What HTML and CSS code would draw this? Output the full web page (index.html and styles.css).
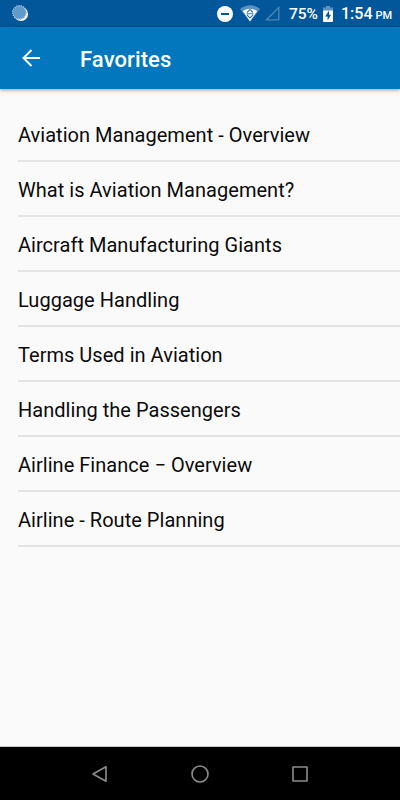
FILE: index.html
```html
<!DOCTYPE html>
<html lang="en">
<head>
    <meta charset="UTF-8">
    <meta name="viewport" content="width=device-width, initial-scale=1.0">
    <title>Favorites</title>
    <link rel="stylesheet" href="styles.css">
</head>
<body>
    <div class="status-bar">
        <svg class="sync-icon" width="18" height="18" viewBox="0 0 18 18">
            <circle cx="9" cy="9" r="7" fill="#fff"/>
            <circle cx="7.500" cy="7.500" r="6.700" fill="#5f9aca"/>
            <circle cx="7.500" cy="7.500" r="6.800" fill="none" stroke="#a9c8e2" stroke-width="1.400" stroke-dasharray="1.200 1"/>
        </svg>
        <svg class="dnd-icon" width="16" height="16" viewBox="0 0 16 16">
            <circle cx="8" cy="8" r="8" fill="#fff"/>
            <path d="M4 8h8" stroke="#02579b" stroke-width="2"/>
        </svg>
        <svg class="wifi-icon" width="20" height="17" viewBox="0 0 20 17">
            <path d="M0 4Q10-3.500 20 4L10 16.500Z" fill="#5b91bf"/>
            <path d="M2.800 6Q10 1.500 17.200 6L10 16.500Z" fill="#fff"/>
            <path d="M7 7.500L10 4.500L13 7.500M6.500 8.800h7M7 10L10 13L13 10" fill="none" stroke="#3b77ad" stroke-width="1.100"/>
        </svg>
        <svg class="signal-icon" width="15" height="15" viewBox="0 0 15 15">
            <path d="M1.500 13.800L13.800 1.500V13.800Z" fill="none" stroke="#4c87b8" stroke-width="1.300"/>
        </svg>
        <span class="battery-level">75%</span>
        <svg class="battery-icon" width="10" height="16" viewBox="0 0 10 16">
            <path d="M3 0h4v1.500h3V5H0V1.500h3Z" fill="#5b91bf"/>
            <path d="M0 4.500h10V15a1 1 0 0 1-1 1H1a1 1 0 0 1-1-1Z" fill="#fff"/>
            <path d="M6 4.500L2.200 10.500H4.600V14.500L8 8.800H6Z" fill="#02579b"/>
        </svg>
        <span class="clock">1:54 <small>PM</small></span>
    </div>

    <header class="toolbar">
        <svg class="back-icon" width="20" height="20" viewBox="0 0 20 20">
            <path d="M19 10H3M10.500 2L2.500 10L10.500 18" fill="none" stroke="#fff" stroke-width="2"/>
        </svg>
        <h1>Favorites</h1>
    </header>

    <main class="content">
        <ul class="favorites-list">
            <li>Aviation Management - Overview</li>
            <li>What is Aviation Management?</li>
            <li>Aircraft Manufacturing Giants</li>
            <li>Luggage Handling</li>
            <li>Terms Used in Aviation</li>
            <li>Handling the Passengers</li>
            <li>Airline Finance − Overview</li>
            <li>Airline - Route Planning</li>
        </ul>
    </main>

    <nav class="nav-bar">
        <svg width="18" height="18" viewBox="0 0 18 18">
            <path d="M2 9L15 1.700V16.300Z"/>
        </svg>
        <svg width="18" height="18" viewBox="0 0 18 18">
            <circle cx="9" cy="9" r="8"/>
        </svg>
        <svg width="18" height="18" viewBox="0 0 18 18">
            <rect x="2" y="2" width="14" height="14"/>
        </svg>
    </nav>
</body>
</html>
```

FILE: styles.css
```css
* {
    margin: 0;
    padding: 0;
    box-sizing: border-box;
}

body {
    font-family: Roboto, sans-serif;
    background: #fafafa;
    color: #0a0a0a;
    height: 800px;
    display: flex;
    flex-direction: column;
    overflow: hidden;
}

svg {
    display: block;
    flex-shrink: 0;
}

/* Status bar */
.status-bar {
    height: 27px;
    background: #02579b;
    color: #fff;
    display: flex;
    align-items: center;
    padding: 0 9px 0 12px;
    font-size: 16px;
    font-weight: 500;
    white-space: nowrap;
}

.dnd-icon {
    margin-left: auto;
}

.wifi-icon {
    margin-left: 7px;
}

.signal-icon {
    margin-left: 5px;
}

.battery-level {
    margin-left: 9px;
    width: 30px;
    font-size: 15.5px;
}

.battery-icon {
    margin-left: 4px;
}

.clock {
    margin-left: 8px;
    width: 50px;
}

.clock small {
    font-size: 11px;
    margin-left: -1px;
}

/* Toolbar */
.toolbar {
    height: 62px;
    background: #0277bd;
    color: #fff;
    display: flex;
    align-items: center;
    padding-left: 21px;
    box-shadow: 0 1px 4px rgba(0, 0, 0, 0.4);
}

.toolbar h1 {
    margin: 2px 0 0 39px;
    font-size: 22px;
    font-weight: 500;
    letter-spacing: 0.1px;
}

/* List */
.content {
    flex: 1;
    padding: 18px 0 0 18px;
}

.favorites-list {
    list-style: none;
}

.favorites-list li {
    height: 55px;
    line-height: 56px;
    font-size: 20px;
    letter-spacing: 0.03px;
    border-bottom: 2px solid #e4e4e4;
    white-space: nowrap;
}

/* Bottom navigation */
.nav-bar {
    height: 54px;
    background: #000;
    border-top: 1px solid #c8c8c8;
    display: flex;
    align-items: center;
    justify-content: center;
    gap: 82px;
}

.nav-bar svg {
    fill: none;
    stroke: #8c8c8c;
    stroke-width: 1.6;
    stroke-linejoin: round;
}
```
